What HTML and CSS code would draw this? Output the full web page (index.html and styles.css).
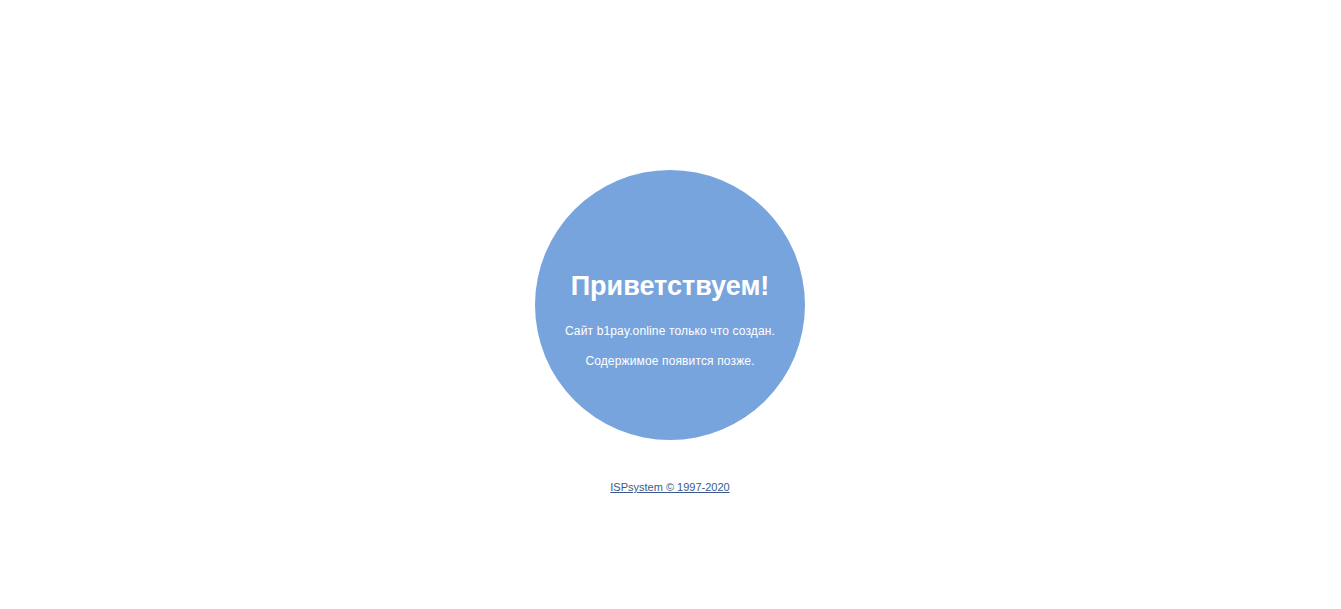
FILE: index.html
```html
<!DOCTYPE html>
<html lang="ru">
<head>
<meta charset="utf-8">
<title>Приветствуем!</title>
<link rel="stylesheet" href="styles.css">
</head>
<body>
<main class="page">
  <div class="circle">
    <h1 class="title">Приветствуем!</h1>
    <p class="text">Сайт b1pay.online только что создан.</p>
    <p class="text">Содержимое появится позже.</p>
  </div>
  <footer class="footer"><a href="#" class="link">ISPsystem © 1997-2020</a></footer>
</main>
</body>
</html>
```

FILE: styles.css
```css
html, body {
  margin: 0;
  padding: 0;
  background: #ffffff;
  font-family: "Liberation Sans", Arial, sans-serif;
}
.page {
  display: flex;
  flex-direction: column;
  align-items: center;
  padding-top: 170px;
  padding-right: 1px;
}
.circle {
  width: 270px;
  height: 270px;
  border-radius: 50%;
  background: #78a4de;
  color: #ffffff;
  display: flex;
  flex-direction: column;
  align-items: center;
  justify-content: flex-start;
  padding-top: 100px;
  box-sizing: border-box;
}
.title {
  margin: 0 0 20px;
  font-size: 27px;
  font-weight: 700;
  line-height: 32px;
}
.text {
  margin: 0 0 12px;
  font-size: 12px;
  line-height: 18px;
  letter-spacing: 0.14px;
}
.footer {
  margin-top: 39px;
  font-size: 11px;
  line-height: 16px;
}
.link {
  color: #3b5a8a;
  text-decoration: underline;
}
```
